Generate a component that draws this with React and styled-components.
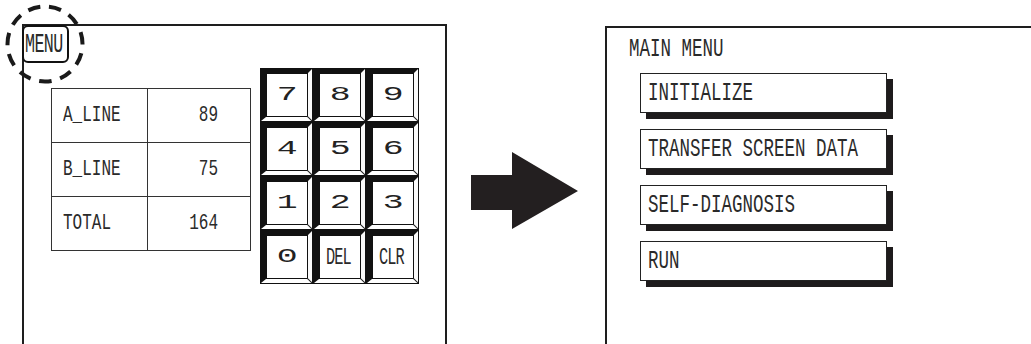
import React from 'react'
import styled, { createGlobalStyle } from 'styled-components'

const Global = createGlobalStyle`
  html, body {
    margin: 0;
    background: #fff;
  }
  body {
    width: 1031px;
    height: 344px;
    overflow: hidden;
    font-family: "Liberation Mono", monospace;
    color: #2a2a2a;
  }
`

const Page = styled.div`
  display: flex;
  align-items: flex-start;
  padding: 24px 0 0 22px;
`

const Panel = styled.div`
  position: relative;
  box-sizing: border-box;
  flex: none;
  width: ${p => p.w}px;
  height: ${p => p.h}px;
  margin-top: ${p => p.top || 0}px;
  margin-left: ${p => p.left || 0}px;
  border: 2px solid #1e1e1e;
  border-bottom-width: 0;
  border-right-width: ${p => (p.open ? 0 : 2)}px;
`

const Txt = styled.span`
  display: inline-block;
  font-size: ${p => p.size || 16}px;
  letter-spacing: ${p => p.ls || 0}px;
  transform: scale(${p => p.sx || 1}, ${p => p.sy || 1.45});
  transform-origin: left center;
  line-height: 1;
  white-space: nowrap;
`

const MenuButton = styled.div`
  position: absolute;
  left: -2px;
  top: -1px;
  width: 47px;
  height: 38px;
  box-sizing: border-box;
  border: 2px solid #111;
  border-radius: 6px;
  background: #fff;
  display: flex;
  align-items: center;
  padding-left: 1px;
  overflow: hidden;
`

const Highlight = styled.svg`
  position: absolute;
  left: -19px;
  top: -22px;
  pointer-events: none;
`

const LeftBody = styled.div`
  display: flex;
  align-items: flex-start;
  gap: 9px;
  padding: 42px 0 0 27px;
`

const Table = styled.div`
  display: grid;
  grid-template-columns: 96px 103px;
  grid-auto-rows: 54px;
  margin-top: 20px;
  border-top: 1px solid #333;
  border-left: 1px solid #333;
`

const Cell = styled.div`
  display: flex;
  align-items: center;
  justify-content: ${p => (p.num ? 'flex-end' : 'flex-start')};
  padding: ${p => (p.num ? '0 32px 0 0' : '0 0 0 11px')};
  border-right: 1px solid #333;
  border-bottom: 1px solid #333;
`

const Keypad = styled.div`
  display: grid;
  grid-template-columns: repeat(3, 53px);
  grid-auto-rows: 54px;
`

const KeyCell = styled.div`
  box-sizing: border-box;
  border: 1px solid #111;
  display: flex;
`

const Bevel = styled.div`
  position: relative;
  flex: 1;
  display: flex;
  border-style: solid;
  border-width: 4px 4px 4px 5px;
  border-color: #111 #fafafa #fff #111;

  &::after {
    content: '';
    position: absolute;
    right: -5px;
    bottom: -2px;
    width: 7px;
    height: 1px;
    background: #222;
    transform: rotate(45deg);
  }
`

const Face = styled.div`
  flex: 1;
  border: 1px solid #111;
  display: flex;
  align-items: center;
  justify-content: center;
`

const Digit = styled.span`
  display: inline-block;
  font-family: "Liberation Mono", monospace;
  font-size: 24px;
  transform: scale(1.45, 0.85);
  line-height: 1;
  color: #222;
`

const Arrow = styled.svg`
  flex: none;
  margin: 128px 0 0 24px;
`

const RightBody = styled.div`
  display: flex;
  flex-direction: column;
  padding: 8px 0 0 22px;
`

const Title = styled.div`
  height: 28px;
  display: flex;
  align-items: center;
`

const MenuList = styled.div`
  display: flex;
  flex-direction: column;
  gap: 16px;
  margin-top: 9px;
  padding-left: 11px;
`

const MenuItem = styled.div`
  box-sizing: border-box;
  width: 247px;
  height: 40px;
  border: 1px solid #222;
  box-shadow: 6px 6px 0 #1e1b1c;
  display: flex;
  align-items: center;
  padding: 2px 0 0 7px;
  background: #fff;
`

const rows = [
  ['A_LINE', '89'],
  ['B_LINE', '75'],
  ['TOTAL', '164'],
]

const keys = ['7', '8', '9', '4', '5', '6', '1', '2', '3', '0', 'DEL', 'CLR']

const menu = ['INITIALIZE', 'TRANSFER SCREEN DATA', 'SELF-DIAGNOSIS', 'RUN']

const App = () => {
  return (
    <>
      <Global />
      <Page>
        <Panel w={425} h={320}>
          <MenuButton>
            <Txt size={17} sx={0.98} sy={1.6} ls={-0.6}>MENU</Txt>
          </MenuButton>
          <Highlight width="80" height="80" viewBox="0 0 80 80">
            <circle
              cx="40"
              cy="40"
              r="37.5"
              fill="none"
              stroke="#1a1a1a"
              strokeWidth="4"
              strokeDasharray="12.5 8.9"
              strokeDashoffset="-4"
              transform="rotate(-90 40 40)"
            />
          </Highlight>
          <LeftBody>
            <Table>
              {rows.map(([name, val]) => (
                <React.Fragment key={name}>
                  <Cell><Txt size={16} sy={1.35}>{name}</Txt></Cell>
                  <Cell num><Txt size={16} sy={1.35}>{val}</Txt></Cell>
                </React.Fragment>
              ))}
            </Table>
            <Keypad>
              {keys.map(k => (
                <KeyCell key={k}>
                  <Bevel>
                    <Face>
                      {k.length > 1
                        ? <Txt size={17} sx={0.9} sy={1.45} ls={-1}>{k}</Txt>
                        : <Digit>{k}</Digit>}
                    </Face>
                  </Bevel>
                </KeyCell>
              ))}
            </Keypad>
          </LeftBody>
        </Panel>

        <Arrow width="107" height="77" viewBox="0 0 107 77">
          <polygon points="0,23 41,23 41,0 107,39 41,77 41,58 0,58" fill="#231f20" />
        </Arrow>

        <Panel w={440} h={318} top={2} left={27} open>
          <RightBody>
            <Title><Txt size={17.5} sy={1.45}>MAIN MENU</Txt></Title>
            <MenuList>
              {menu.map(m => (
                <MenuItem key={m}>
                  <Txt size={17.5} sy={1.45}>{m}</Txt>
                </MenuItem>
              ))}
            </MenuList>
          </RightBody>
        </Panel>
      </Page>
    </>
  )
}

export default App
